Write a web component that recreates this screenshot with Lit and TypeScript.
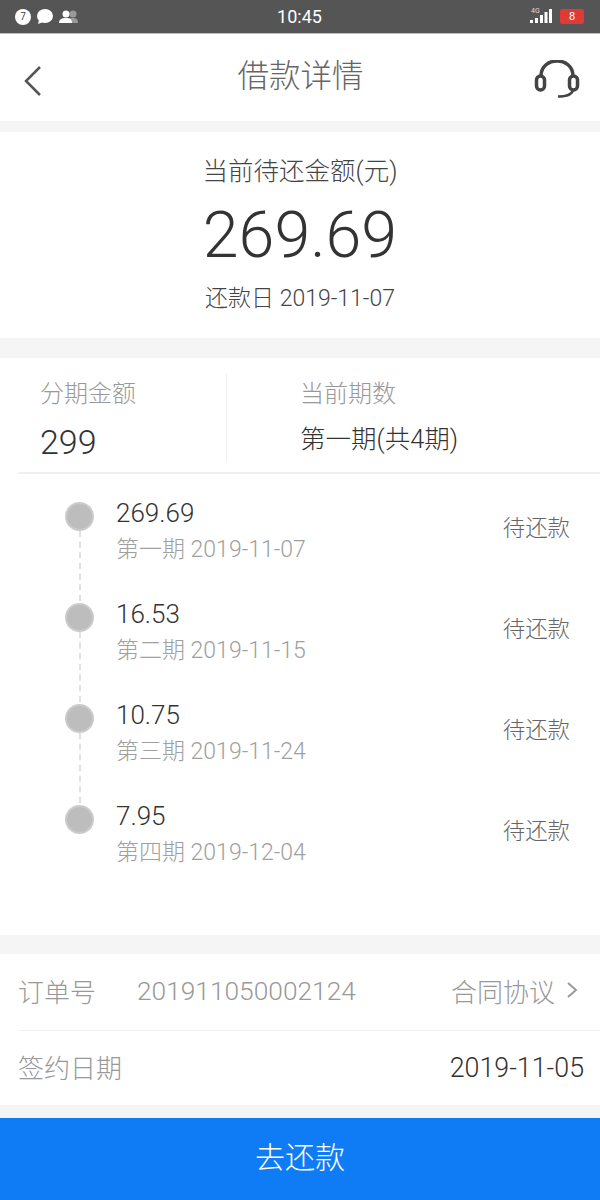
import {css, html, LitElement} from 'lit';
import {customElement} from 'lit/decorators.js';

const PERIODS = [
  {amount: '269.69', label: '第一期 2019-11-07'},
  {amount: '16.53', label: '第二期 2019-11-15'},
  {amount: '10.75', label: '第三期 2019-11-24'},
  {amount: '7.95', label: '第四期 2019-12-04'},
];

@customElement('app-root')
export class AppRoot extends LitElement {
  static override styles = css`
    :host {
      display: flex;
      flex-direction: column;
      width: 600px;
      height: 1200px;
      overflow: hidden;
      background: #f5f5f6;
      font-family: Roboto, "Noto Sans CJK SC", sans-serif;
      font-weight: 300;
      color: #333;
    }

    .status {
      display: grid;
      grid-template-columns: 1fr auto 1fr;
      align-items: center;
      height: 34px;
      flex: none;
      padding: 0 16px 0 15px;
      box-sizing: border-box;
      background: #555;
      border-bottom: 1px solid #bbb;
      color: #fff;
    }
    .status-left { display: flex; align-items: center; gap: 5px; }
    .status-right { display: flex; align-items: center; justify-content: flex-end; gap: 8px; }
    .time { font-size: 18px; font-weight: 400; }
    .badge-7 {
      width: 16px;
      height: 16px;
      border-radius: 50%;
      background: #fff;
      color: #444;
      font-size: 10px;
      font-weight: 400;
      line-height: 16px;
      text-align: center;
    }
    .signal { position: relative; display: flex; }
    .signal .net {
      position: absolute;
      left: 1px;
      top: -2px;
      font-size: 7px;
      font-weight: 400;
      line-height: 8px;
      color: #ddd;
    }
    .battery {
      width: 24px;
      height: 15px;
      border-radius: 2px;
      background: #e03a37;
      font-size: 11px;
      font-weight: 400;
      line-height: 15px;
      text-align: center;
    }

    .nav {
      display: grid;
      grid-template-columns: 1fr auto 1fr;
      align-items: center;
      height: 87px;
      flex: none;
      padding: 0 20px 0 23px;
      background: #fff;
    }
    .nav .back { margin-top: 7px; }
    .nav .headset { justify-self: end; margin-top: 2px; }
    .nav h1 {
      margin: 0;
      font-size: 31.500px;
      font-weight: 300;
      color: #666;
      line-height: 1;
      position: relative;
      top: -1px;
      left: -1px;
    }

    .summary {
      margin-top: 11px;
      height: 206px;
      flex: none;
      background: #fff;
      display: flex;
      flex-direction: column;
      align-items: center;
      box-sizing: border-box;
      padding-top: 21px;
    }
    .summary .title { font-size: 25.500px; line-height: 36px; color: #444; }
    .summary .total { font-size: 64.500px; line-height: 74px; margin-top: 9px; color: #333; }
    .summary .due { font-size: 23px; line-height: 30px; margin-top: 12px; color: #444; }

    .plan {
      margin-top: 20px;
      height: 577px;
      flex: none;
      background: #fff;
    }
    .overview {
      display: flex;
      height: 116px;
      margin-left: 18px;
      box-sizing: border-box;
      border-bottom: 2px solid #f0f0f0;
    }
    .overview .cell { padding-top: 19px; box-sizing: border-box; }
    .overview .cell:first-child {
      width: 209px;
      padding-left: 22px;
      position: relative;
    }
    .overview .cell:first-child::after {
      content: "";
      position: absolute;
      right: 0;
      top: 16px;
      bottom: 11px;
      width: 1px;
      background: #f0f0f0;
    }
    .overview .cell:last-child { padding-left: 73px; }
    .overview .label { font-size: 24px; line-height: 34px; color: #999; }
    .overview .num { font-size: 34px; line-height: 40px; margin-top: 11px; color: #333; }
    .overview .txt { font-size: 25.500px; line-height: 34px; margin-top: 11px; color: #333; }

    .timeline { padding-top: 25px; }
    .period {
      display: flex;
      height: 101px;
      padding-left: 65px;
      padding-right: 30px;
      position: relative;
    }
    .period:not(:last-child)::after {
      content: "";
      position: absolute;
      left: 79px;
      top: 32px;
      bottom: -1px;
      border-left: 2px dashed #e0e0e0;
    }
    .dot {
      width: 29px;
      height: 29px;
      border-radius: 50%;
      background: #bdbdbd;
      border: 2px solid #cbcbcb;
      box-sizing: border-box;
      flex: none;
      margin-top: 3px;
    }
    .period .body { margin-left: 22px; flex: 1; }
    .period .amount { font-size: 26px; line-height: 30px; color: #333; margin-top: -1px; }
    .period .when { font-size: 23px; line-height: 30px; margin-top: 7px; color: #a0a0a0; }
    .period .state {
      font-size: 22.400px;
      color: #666;
      line-height: 30px;
      margin-top: 14px;
    }

    .rows { margin-top: 19px; background: #fff; height: 151px; flex: none; }
    .row {
      display: flex;
      align-items: center;
      height: 76px;
      margin-left: 18px;
      padding-right: 16px;
      font-size: 26px;
      color: #999;
      box-sizing: border-box;
    }
    .row span { position: relative; top: -2px; }
    .row + .row { border-top: 1px solid #f0f0f0; height: 75px; }
    .row .order { margin-left: 41px; flex: 1; font-size: 26.300px; top: -1px; }
    .row .spacer { flex: 1; }
    .row .date { color: #333; font-size: 26.800px; top: 0; }
    .row .link { display: flex; align-items: center; gap: 11px; margin-right: 6px; }

    .pay {
      margin-top: 13px;
      height: 82px;
      flex: none;
      background: #0f7cf6;
      color: #fff;
      display: flex;
      align-items: center;
      justify-content: center;
      font-size: 30px;
      padding-bottom: 8px;
      box-sizing: border-box;
    }
  `;

  override render() {
    return html`
      <div class="status">
        <div class="status-left">
          <div class="badge-7">7</div>
          <svg width="18" height="17" viewBox="0 0 18 17"><ellipse cx="9" cy="8" rx="8" ry="7" fill="#fff"/><path d="M3 12 L2 16 L7 14Z" fill="#fff"/></svg>
          <svg width="20" height="14" viewBox="0 0 20 14"><circle cx="14" cy="4" r="3.5" fill="#999"/><path d="M8 13c0-4 3-5 6-5s5 1 5 5z" fill="#999"/><circle cx="7" cy="4" r="3.5" fill="#fff"/><path d="M0 13c0-4 3-5 7-5s6 1 6 5z" fill="#fff"/></svg>
        </div>
        <div class="time">10:45</div>
        <div class="status-right">
          <div class="signal">
            <span class="net">4G</span>
            <svg width="22" height="15" viewBox="0 0 22 15" fill="#fff"><rect x="0" y="11" width="3" height="3"/><rect x="5" y="9" width="3" height="5"/><rect x="10" y="6" width="3" height="8"/><rect x="14.500" y="3" width="3" height="11"/><rect x="19" y="0" width="3" height="14"/></svg>
          </div>
          <div class="battery">8</div>
        </div>
      </div>

      <div class="nav">
        <svg class="back" width="20" height="32" viewBox="0 0 20 32" fill="none" stroke="#555" stroke-width="2.500"><path d="M17 2 L3 16 L17 30"/></svg>
        <h1>借款详情</h1>
        <svg class="headset" width="46" height="38" viewBox="0 0 46 38" fill="none" stroke="#444" stroke-width="3.500">
          <path d="M7 16 C7 -4 39 -4 39 16"/>
          <rect x="2.500" y="16" width="8" height="14" rx="4"/>
          <rect x="35.500" y="16" width="8" height="14" rx="4"/>
          <path d="M39 30 C38 35 32 36.500 24 36.500" stroke-width="2.500"/>
        </svg>
      </div>

      <div class="summary">
        <div class="title">当前待还金额(元)</div>
        <div class="total">269.69</div>
        <div class="due">还款日 2019-11-07</div>
      </div>

      <div class="plan">
        <div class="overview">
          <div class="cell">
            <div class="label">分期金额</div>
            <div class="num">299</div>
          </div>
          <div class="cell">
            <div class="label">当前期数</div>
            <div class="txt">第一期(共4期)</div>
          </div>
        </div>
        <div class="timeline">
          ${PERIODS.map(
            (p) => html`
              <div class="period">
                <div class="dot"></div>
                <div class="body">
                  <div class="amount">${p.amount}</div>
                  <div class="when">${p.label}</div>
                </div>
                <div class="state">待还款</div>
              </div>
            `
          )}
        </div>
      </div>

      <div class="rows">
        <div class="row">
          <span>订单号</span>
          <span class="order">201911050002124</span>
          <span class="link">合同协议
            <svg width="12" height="18" viewBox="0 0 12 18" fill="none" stroke="#999" stroke-width="2"><path d="M2 2 L10 9 L2 16"/></svg>
          </span>
        </div>
        <div class="row">
          <span>签约日期</span>
          <span class="spacer"></span>
          <span class="date">2019-11-05</span>
        </div>
      </div>

      <div class="pay">去还款</div>
    `;
  }
}
